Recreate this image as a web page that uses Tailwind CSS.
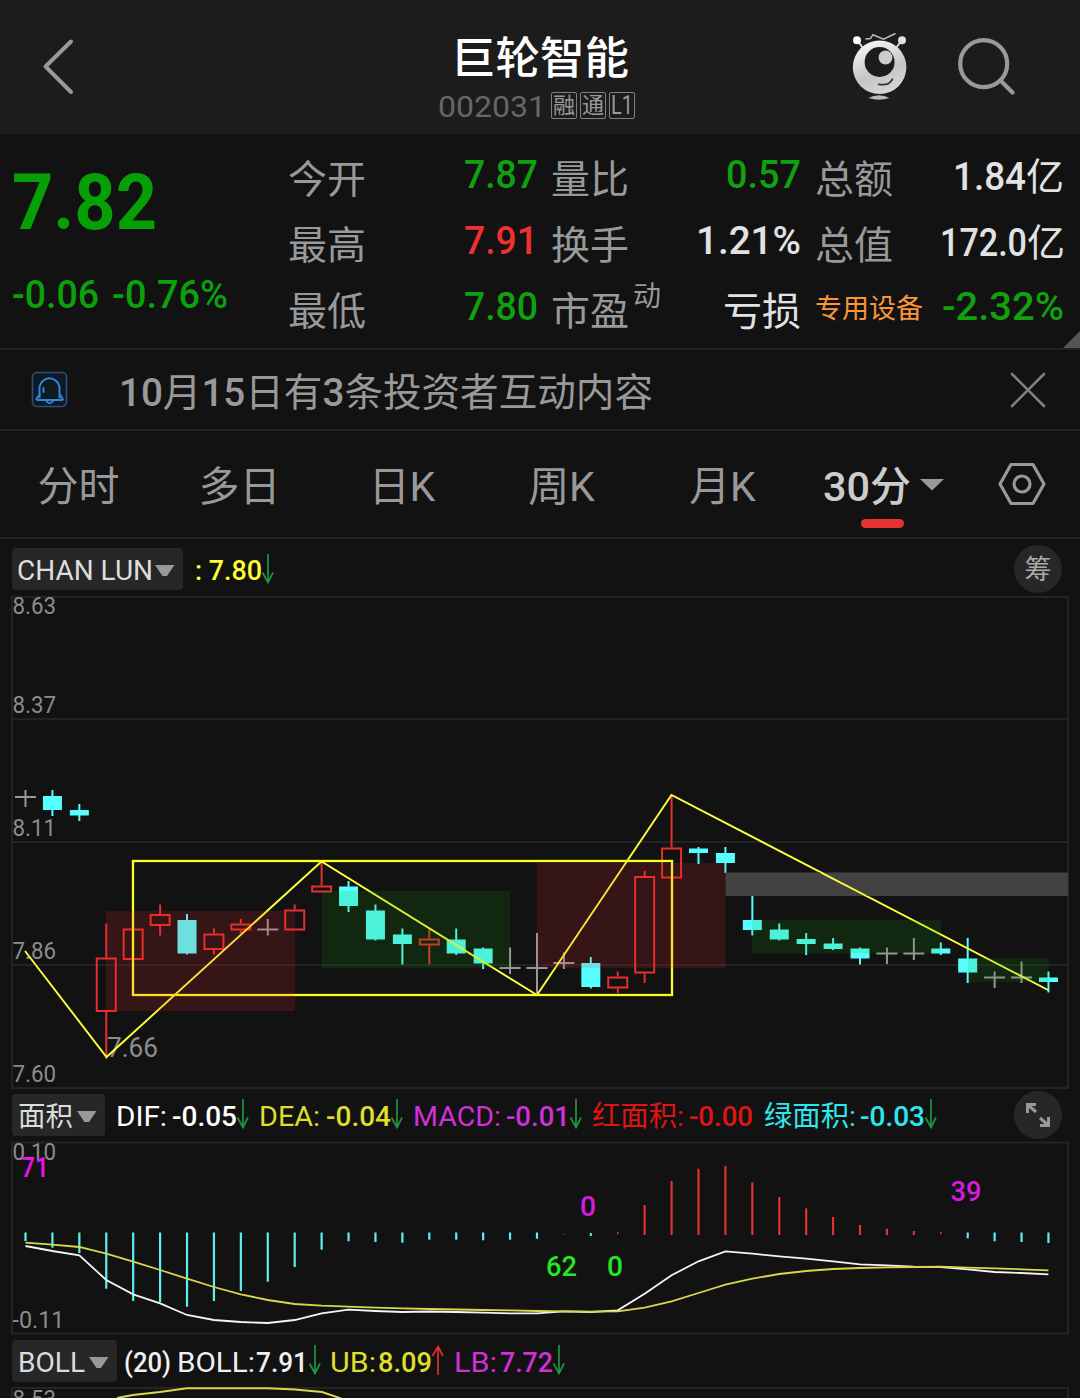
<!DOCTYPE html>
<html lang="zh-CN">
<head>
<meta charset="utf-8">
<title>巨轮智能 002031</title>
<script src="https://cdn.jsdelivr.net/npm/@tailwindcss/browser@4"></script>
</head>
<body class="w-[1080px] h-[1398px] overflow-hidden bg-[#121212] font-[Roboto,'Noto_Sans_CJK_SC',sans-serif] text-[#999]">

<!-- title bar -->
<header class="flex h-[134px] bg-[#1c1c1c]">
  <div class="w-[438px] pl-[40px] pt-[36px]">
    <svg width="38" height="62" fill="none" stroke="#999" stroke-width="4" stroke-linecap="round" stroke-linejoin="round"><path d="M31 5.500L5.500 30.500L31 56"/></svg>
  </div>
  <div class="w-[204px] pt-[35px]">
    <div class="h-[48px] pl-[13px] text-[44.500px] leading-[48px] font-medium text-white whitespace-nowrap">巨轮智能</div>
    <div class="mt-[9px] flex h-[27px] items-center text-[#666]">
      <span data-w="108" class="mt-[3px] text-[29px] leading-[27px] mr-[5px]">002031</span>
      <span class="flex gap-[3px] text-[22px] text-[#999]">
        <span class="w-[26px] h-[27px] border border-[#808080] rounded-[2px] leading-[25px] flex justify-center">融</span>
        <span class="w-[26px] h-[27px] border border-[#808080] rounded-[2px] leading-[25px] flex justify-center">通</span>
        <span class="w-[26px] h-[27px] border border-[#808080] rounded-[2px] leading-[25px] flex justify-center"><span data-w="22" class="text-[26px]">L1</span></span>
      </span>
    </div>
  </div>
  <svg class="ml-[198px]" width="80" height="134" viewBox="840 0 80 134">
    <defs><linearGradient id="ball" x1=".3" y1="0" x2=".7" y2="1"><stop offset="0" stop-color="#f4f4f4"/><stop offset=".6" stop-color="#c6c6c6"/><stop offset="1" stop-color="#d8d8d8"/></linearGradient></defs>
    <path d="M857 40l6 8M902 40l-6 8" stroke="#ddd" stroke-width="2"/>
    <circle cx="857" cy="40.300" r="4" fill="#fff"/><circle cx="902" cy="40.300" r="4" fill="#e0e0e0"/>
    <path d="M865.500 39l5-.5 2.500-3.800 10.500 4.500 12-5.700" fill="none" stroke="#bbb" stroke-width="1.500"/>
    <circle cx="879.600" cy="67.300" r="26.800" fill="url(#ball)"/>
    <circle cx="879.600" cy="62" r="15" fill="#1c1c1c"/><circle cx="885.500" cy="57.500" r="6.900" fill="#ccc"/>
    <path d="M878.700 84.300Q889 86 892.300 79.300" fill="none" stroke="#333" stroke-width="1.800" stroke-linecap="round"/>
    <path d="M868.500 98Q879 92.500 889.500 98Q879 101.500 868.500 98Z" fill="#bbb"/>
  </svg>
  <svg class="ml-[30px]" width="80" height="134" viewBox="950 0 80 134" fill="none" stroke="#999" stroke-width="4.200" stroke-linecap="round"><circle cx="983.700" cy="63.700" r="23.500"/><path d="M1000.500 80.500L1012.500 92.500"/></svg>
</header>

<!-- quote summary -->
<section class="relative flex h-[216px] border-b-2 border-[#222] pt-[13px] text-[39px] leading-[66px] whitespace-nowrap">
  <div class="w-[288px] pl-[12px] text-[#0da00d]">
    <div class="h-[115px] leading-[113px] text-[77px] font-bold text-[#05a005]"><span data-w="145">7.82</span></div>
    <div class="flex h-[66px] font-medium text-[38px]"><span data-w="87" class="mr-[13px]">-0.06</span><span data-w="116">-0.76%</span></div>
  </div>
  <div class="w-[250px]">
    <div class="flex h-[66px] justify-between"><span>今开</span><span class="-mt-[5px] font-medium text-[#10a010]" data-w="74">7.87</span></div>
    <div class="flex h-[66px] justify-between"><span>最高</span><span class="-mt-[5px] font-medium text-[#f03030]" data-w="74">7.91</span></div>
    <div class="flex h-[66px] justify-between"><span>最低</span><span class="-mt-[5px] font-medium text-[#10a010]" data-w="74">7.80</span></div>
  </div>
  <div class="ml-[13px] w-[250px] text-[#999]">
    <div class="flex h-[66px] justify-between"><span>量比</span><span class="-mt-[5px] font-medium text-[#10a010]" data-w="75">0.57</span></div>
    <div class="flex h-[66px] justify-between"><span>换手</span><span class="-mt-[5px] font-medium text-[#e2e2e2]" data-w="105">1.21%</span></div>
    <div class="flex h-[66px] justify-between"><span class="flex">市盈<span class="ml-[4px] text-[28px] leading-[36px]">动</span></span><span class="text-[#e2e2e2]">亏损</span></div>
  </div>
  <div class="ml-[14px] w-[249px] text-[#999]">
    <div class="flex h-[66px] justify-between"><span>总额</span><span class="-mt-[3px] flex text-[#e2e2e2]"><span data-w="73" class="font-medium">1.84</span><span class="text-[38px]">亿</span></span></div>
    <div class="flex h-[66px] justify-between"><span>总值</span><span class="-mt-[3px] -mr-[1px] flex text-[#e2e2e2]"><span data-w="87" class="font-medium">172.0</span><span class="text-[38px]">亿</span></span></div>
    <div class="flex h-[66px] justify-between"><span class="text-[27px] leading-[60px] text-[#f9963a]">专用设备</span><span class="-mt-[5px] font-medium text-[#10a010]" data-w="122">-2.32%</span></div>
  </div>
  <svg class="absolute right-0 bottom-0" width="17" height="17"><path d="M17 0V17H0Z" fill="#555"/></svg>
</section>

<!-- notice -->
<section class="flex h-[81px] items-center border-b-2 border-[#222]">
  <svg class="ml-[31px] mr-[51px]" width="37" height="37" fill="none" stroke="#2f86dd" stroke-width="2" stroke-linecap="round" stroke-linejoin="round">
    <rect x="1.500" y="1.500" width="34" height="34" rx="4.500" stroke="#26507f" stroke-width="1.600" fill="#101820"/>
    <path d="M8.500 26.500V16a10.200 10.800 0 0 1 20 0V26.500M9 23L5.500 27.500Q5 29 7 29H30.500Q32.500 29 31.500 27.500L28.500 23M12.500 17V21M15 29.500Q18.500 35 22.500 29.500"/>
  </svg>
  <div data-w="534" class="mt-[6px] text-[39px] leading-[72px]"><tspan class="font-medium">10</tspan>月<tspan class="font-medium">15</tspan>日有<tspan class="font-medium">3</tspan>条投资者互动内容</div>
  <svg class="ml-auto mr-[33px]" width="38" height="38" stroke="#808080" stroke-width="2.600" stroke-linecap="round"><path d="M3 3L35 35M35 3L3 35"/></svg>
</section>

<!-- period tabs -->
<nav class="flex h-[108px] items-center border-b-2 border-[#222] pt-[6px] text-[41px] leading-[60px] whitespace-nowrap">
  <div class="-ml-[2px] w-[161px] text-center">分时</div>
  <div class="w-[161px] text-center">多日</div>
  <div class="w-[161px] pl-[3px] text-center">日K</div>
  <div class="w-[161px] text-center">周K</div>
  <div class="w-[161px] text-center">月K</div>
  <div class="relative ml-[20px] flex items-center font-medium text-[#ccc]">
    <span data-w="47">30</span><span>分</span>
    <svg class="ml-[9px] -mt-[5px]" width="24" height="12"><path d="M0 0H24L12 11.500Z" fill="#999"/></svg>
    <span class="absolute left-[38px] top-[62px] h-[9px] w-[43px] rounded-full bg-[#e53232]"></span>
  </div>
  <svg class="ml-auto mr-[33px] -mt-[6px]" width="50" height="46" fill="none" stroke="#999" stroke-width="3.200" stroke-linejoin="round"><path d="M14 3.500H36L47 23L36 42.500H14L3 23Z"/><circle cx="25" cy="23" r="8"/></svg>
</nav>

<!-- main chart -->
<section class="flex h-[57px] items-center pl-[12px] pr-[18px] pt-[7px] text-[28px]">
  <div class="-mt-[4px] flex h-[42px] w-[171px] items-center rounded-[4px] bg-[#272727] pl-[5px] pt-[4px] text-[#ddd]"><span data-w="136">CHAN LUN</span><svg class="ml-[2px] -mt-[1px]" width="20" height="12"><path d="M0 0H19.500L12 11H7.500Z" fill="#999"/></svg></div>
  <span data-w="67" class="ml-[12px] font-medium text-[#ffff33]">: 7.80</span>
  <svg class="-ml-[1px] -mt-[4px] text-[#1f9447]" width="14" height="30" fill="none" stroke="currentColor" stroke-width="1.700"><path d="M7 0V28M1.500 18.500L7 28.500L12 18.500"/></svg>
  <div class="ml-auto -mt-[4px] flex size-[48px] items-center justify-center rounded-full bg-[#272727] pt-[3px] text-[27px] text-[#aaa]">筹</div>
</section>
<svg class="block" id="k" width="1080" height="493" viewBox="0 596 1080 493"></svg>

<!-- area / MACD -->
<section class="flex h-[52px] items-center pl-[12px] pr-[18px] pt-[4px] text-[28px] whitespace-nowrap">
  <div class="-mt-[4px] flex h-[42px] w-[93px] items-center rounded-[4px] bg-[#272727] pl-[6px] pt-[4px] text-[27.500px] text-[#ddd]">面积<svg class="ml-[4px] -mt-[1px]" width="20" height="12"><path d="M0 0H19.500L12 11H7.500Z" fill="#999"/></svg></div>
  <span class="ml-[11px] flex items-center text-white"><span data-w="56" data-t="51">DIF:</span><span data-w="65" class="font-medium">-0.05</span></span>
  <svg class="-ml-[1px] -mt-[6px] text-[#1f9447]" width="14" height="30" fill="none" stroke="currentColor" stroke-width="1.700"><path d="M7 0V28M1.500 18.500L7 28.500L12 18.500"/></svg>
  <span class="ml-[9px] flex items-center text-[#dede2c]"><span data-w="67" data-t="61">DEA:</span><span data-w="65" class="font-medium">-0.04</span></span>
  <svg class="-ml-[1px] -mt-[6px] text-[#1f9447]" width="14" height="30" fill="none" stroke="currentColor" stroke-width="1.700"><path d="M7 0V28M1.500 18.500L7 28.500L12 18.500"/></svg>
  <span class="ml-[9px] flex items-center text-[#d030d8]"><span data-w="93" data-t="88">MACD:</span><span data-w="64" class="font-medium">-0.01</span></span>
  <svg class="-ml-[1px] -mt-[6px] text-[#1f9447]" width="14" height="30" fill="none" stroke="currentColor" stroke-width="1.700"><path d="M7 0V28M1.500 18.500L7 28.500L12 18.500"/></svg>
  <span class="ml-[9px] flex items-center text-[#e01414]"><span data-w="97" data-t="92">红面积:</span><span data-w="64" class="font-medium">-0.00</span></span>
  <span class="ml-[11px] flex items-center text-[#2ce8ec]"><span data-w="96" data-t="92">绿面积:</span><span data-w="65" class="font-medium">-0.03</span></span>
  <svg class="-ml-[1px] -mt-[6px] text-[#1f9447]" width="14" height="30" fill="none" stroke="currentColor" stroke-width="1.700"><path d="M7 0V28M1.500 18.500L7 28.500L12 18.500"/></svg>
  <div class="ml-auto -mt-[4px] flex size-[48px] items-center justify-center rounded-full bg-[#272727]"><svg width="26" height="26" fill="none" stroke="#999" stroke-width="3"><path d="M2.500 11V2.500H11M3 3L11 10M23.500 15V23.500H15M23 23L15 16"/></svg></div>
</section>
<svg class="block" id="m" width="1080" height="194" viewBox="0 1141 1080 194"></svg>

<!-- BOLL -->
<section class="flex h-[52px] items-center pl-[12px] pt-[4px] text-[28px] whitespace-nowrap">
  <div class="-mt-[4px] flex h-[42px] w-[105px] items-center rounded-[4px] bg-[#272727] pl-[6px] pt-[4px] text-[#ddd]"><span data-w="67">BOLL</span><svg class="ml-[4px] -mt-[1px]" width="20" height="12"><path d="M0 0H19.500L12 11H7.500Z" fill="#999"/></svg></div>
  <span data-w="47" class="ml-[7px] font-medium text-[#f0f0f0]">(20)</span>
  <span class="ml-[6px] flex items-center text-[#f0f0f0]"><span data-w="78">BOLL:</span><span data-w="52" class="ml-[1px] font-medium">7.91</span></span>
  <svg class="-mt-[6px] text-[#1f9447]" width="14" height="30" fill="none" stroke="currentColor" stroke-width="1.700"><path d="M7 0V28M1.500 18.500L7 28.500L12 18.500"/></svg>
  <span class="ml-[8px] flex items-center text-[#dede2c]"><span data-w="48" data-t="46">UB:</span><span data-w="54" class="font-medium">8.09</span></span>
  <svg class="-ml-[1px] -mt-[6px] text-[#e03232]" width="14" height="30" fill="none" stroke="currentColor" stroke-width="1.700"><path d="M7 30V2M1.500 11L7 1.500L12 11"/></svg>
  <span class="ml-[9px] flex items-center text-[#d030d8]"><span data-w="46" data-t="43">LB:</span><span data-w="53" class="font-medium">7.72</span></span>
  <svg class="-ml-[1px] -mt-[6px] text-[#1f9447]" width="14" height="30" fill="none" stroke="currentColor" stroke-width="1.700"><path d="M7 0V28M1.500 18.500L7 28.500L12 18.500"/></svg>
</section>
<svg class="block" id="b" width="1080" height="11" viewBox="0 1387 1080 11"></svg>

<script>
// Fit each label with data-w to its column; data-t gives a narrower text inside the column.
document.querySelectorAll('[data-w]').forEach(el => {
  const w = el.dataset.w, t = el.dataset.t || w;
  el.innerHTML = `<svg class="inline align-baseline overflow-visible" width="${w}" height="1"><text x="0" y="1" fill="currentColor" textLength="${t}" lengthAdjust="spacingAndGlyphs">${el.innerHTML}</text></svg>`;
});

const X = i => 25.5 + i * 26.92;
const line = (x1, y1, x2, y2, c, w = 2) => `<path d="M${x1} ${y1}L${x2} ${y2}" stroke="${c}" stroke-width="${w}" fill="none"/>`;
const poly = (p, c, w = 2) => `<polyline points="${p}" stroke="${c}" stroke-width="${w}" fill="none"/>`;
const text = (x, y, s, w, t, c, wt = 400) => `<text x="${x}" y="${y}" font-size="${s}" textLength="${w}" lengthAdjust="spacingAndGlyphs" font-weight="${wt}" fill="${c}">${t}</text>`;
const frame = (y, h) => `<rect x="12" y="${y}" width="1056" height="${h}" fill="none" stroke="#242424" stroke-width="2"/>`;

// candles: kind, wick top, wick bottom, body top, body bottom
const K = [
 ['d',790,807,797],['c',790,816,796,810],['c',804,821,810,815.5],['r',923.5,1059,957.5,1012],['r',928.5,960,928.5,960],
 ['r',904.5,935.5,914,926],['c',914,954.5,920,953.5],['r',928.5,954.5,933.5,950],['r',919,933,923.5,930.5],['d',919,935.5,929.5],
 ['r',904.5,930.5,909.5,930.5],['r',862,892.5,885.5,892.5],['c',881,912,886.5,906],['c',904.5,940.5,910.5,939.5],['c',928.5,964.5,934.5,944],
 ['r',929.5,964.5,938.5,945.5],['c',928.5,955,939.5,953.5],['c',947.5,969,948.5,963.5],['d',947.5,974,968],['d',933,993,968],
 ['d',952.5,969,963],['c',957,988.5,963,987],['r',971.5,993,976.5,988.5],['r',871,983,876,973.5],['r',795,878.5,847.5,878.5],
 ['c',847,864,848.5,853],['c',847,873,853,863],['c',895,935.5,920,930],['c',923.5,940.5,929.5,939.5],['c',933,955,939,944],
 ['c',938,950,943.5,949],['c',947.5,964.5,948.5,958.5],['d',947.5,964,953.5],['d',938,960,953.5],['c',942.5,955,948.5,953.5],
 ['c',938,983,958.5,972.5],['d',971.5,988,977.5],['d',961.5,983,977.5],['c',971.5,992.5,977.5,982]];
let s = frame(597, 491) + [719, 842, 965].map(y => line(12, y, 1068, y, '#222')).join('');
s += [['8.63',613.7],['8.37',712.7],['8.11',835.7],['7.86',958.5],['7.60',1081.7]].map(a => text(12.5, a[1], 23, 43.5, a[0], '#8c8c8c')).join('');
s += text(107, 1057.3, 27, 51, '7.66', '#8c8c8c');
K.forEach(([k, h, l, a, b], i) => {
  const x = X(i);
  if (k === 'd') s += line(x, h, x, l, '#999') + line(x - 10.5, a, x + 10.5, a, '#999');
  else if (k === 'c') s += line(x, h, x, l, '#55ffff') + `<rect x="${x - 9.5}" y="${a}" width="19" height="${b - a}" fill="#55ffff"/>`;
  else s += line(x, h, x, a, '#e62e2e') + line(x, b, x, l, '#e62e2e') + `<rect x="${x - 9.5}" y="${a + 1}" width="19" height="${b - a - 2}" fill="none" stroke="#e62e2e" stroke-width="2"/>`;
});
s += poly('25,951 106.5,1057 321.5,861.5 537,995 671.5,795 1048,990', '#ffff3c', 1.9);
s += '<rect x="133" y="861" width="539" height="134" fill="none" stroke="#ffff28" stroke-width="2.3"/>';
s += [[106,189,911,100,'255,40,40'],[322,188,891,77,'18,160,0'],[537,188.5,863,105,'255,40,40'],[752,189,920,33.5,'18,160,0'],[968,80.500,958,24,'18,160,0']]
  .map(z => `<rect x="${z[0]}" y="${z[2]}" width="${z[1]}" height="${z[3]}" fill="rgba(${z[4]},.15)"/>`).join('');
s += '<rect x="725.5" y="872.5" width="342.5" height="23.500" fill="#424242"/>' + line(820.7, 872.3, 866.5, 896, '#ffff3c', 1.9);
document.getElementById('k').innerHTML = s;

// histogram and DIF / DEA lines
const down = [1241,1247.7,1253,1288.7,1301,1302,1306.7,1301,1291,1281.7,1267,1249.7,1241.3,1242,1242.7,1239.7,1239.7,1240.3,1239.7,1238.7];
const up = [1232,1205,1181,1168.7,1166,1182.3,1197,1208.3,1217,1225,1228.7,1231,1232];
const dif = [1246,1251,1255.3,1280,1294.3,1303.3,1315,1320,1322,1323,1320,1313.3,1309.7,1311,1312,1311.5,1312,1312.7,1313.4,1313.3,1311.3,1312,1310.3,1293.7,1275.3,1261.3,1251.3,1253.7,1256.3,1258.7,1261.3,1264.3,1265.3,1266.7,1267,1269.3,1272,1273,1274.3];
const dea = [1242.7,1244.7,1247,1253.7,1261.7,1270,1278.7,1287,1294.3,1300,1304,1305.7,1306.7,1307.7,1308.3,1309,1309.5,1310,1310.3,1311,1311.3,1311.7,1311.3,1307.7,1301.3,1293,1284.7,1278.7,1274,1271,1269,1268,1267.3,1267,1266.7,1267.7,1268.3,1269.3,1270.3];
s = frame(1142.5, 191) + text(12.5, 1159.5, 23, 43.5, '0.10', '#8c8c8c') + text(12.5, 1328, 23, 52, '-0.11', '#8c8c8c');
down.forEach((y, i) => s += line(X(i), 1232.5, X(i), y, '#5cf0f0', 2.2));
s += line(X(20), 1233.5, X(20), 1234.5, '#a02828') + line(X(21), 1233, X(21), 1236, '#5cf0f0');
up.forEach((y, i) => s += line(X(22 + i), y, X(22 + i), i && i < 12 ? 1235 : 1234.3, '#e03232', i && i < 12 ? 2.2 : 1.5));
[1238.3,1241.3,1242,1243].forEach((y, i) => s += line(X(35 + i), 1232.5, X(35 + i), y, '#5cf0f0', 2.2));
s += poly(dif.map((y, i) => X(i) + ',' + y).join(' '), '#f4f4f4', 1.8) + poly(dea.map((y, i) => X(i) + ',' + y).join(' '), '#d8d84c', 1.8);
s += text(21, 1176.7, 28, 28, '71', '#f010f0', 500) + text(580, 1215.700, 28, 16, '0', '#d81ae0', 500) + text(546, 1276, 28, 31, '62', '#22e822', 500) + text(607, 1276, 28, 16, '0', '#22e822', 500) + text(950.5, 1201, 28, 31, '39', '#d81ae0', 500);
document.getElementById('m').innerHTML = s;

document.getElementById('b').innerHTML = frame(1388, 60) + text(12.5, 1407, 23, 43.5, '8.53', '#8c8c8c') + poly('117,1398 133,1395 160,1392 187,1388.3 268,1388.3 295,1389.5 322,1392 341,1398.5', '#d8d84c');
</script>
</body>
</html>
